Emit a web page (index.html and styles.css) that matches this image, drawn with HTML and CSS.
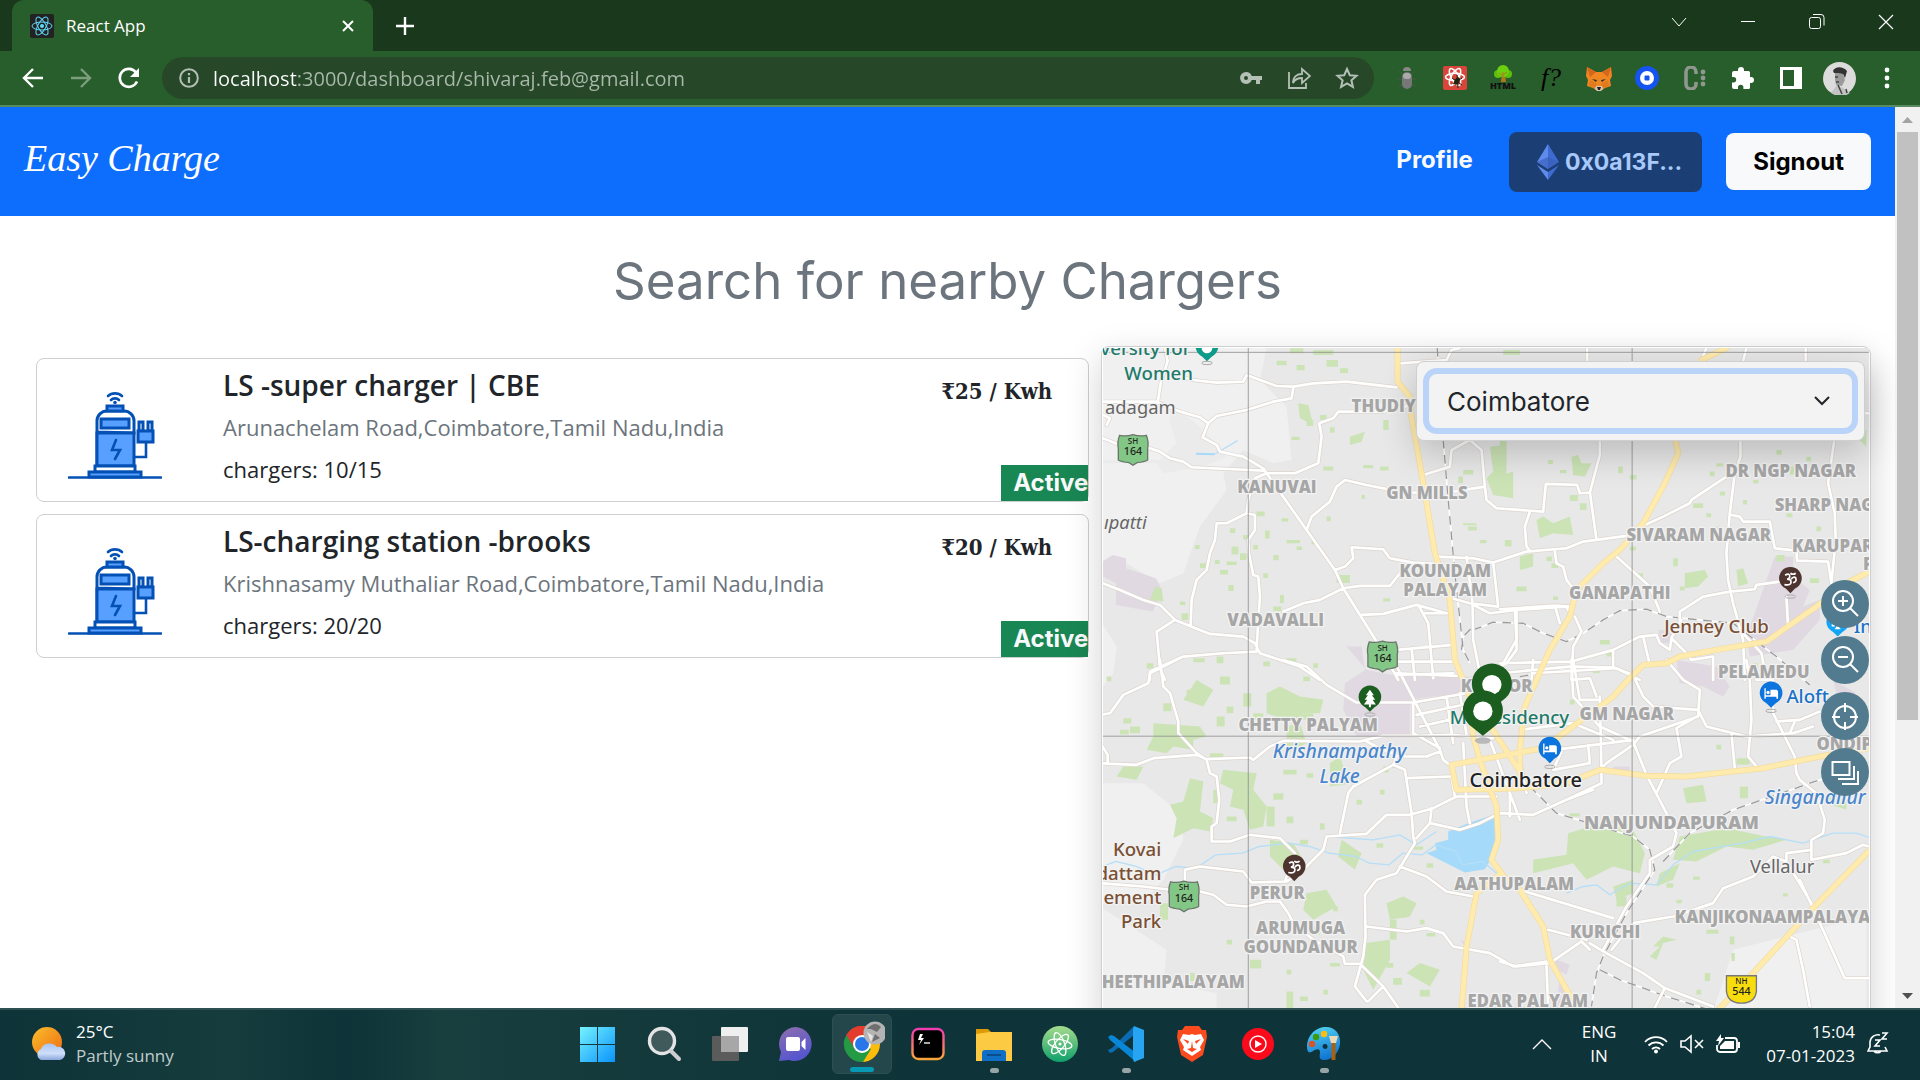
FILE: index.html
```html
<!DOCTYPE html>
<html lang="en">
<head>
<meta charset="utf-8">
<title>React App</title>
<meta name="viewport" content="width=device-width, initial-scale=1">
<link rel="stylesheet" href="styles.css">
</head>
<body>
<div class="tabstrip">
  <div class="tab">
    <svg class="favicon" viewBox="0 0 24 24"><rect width="24" height="24" rx="2" fill="#222"/><g fill="none" stroke="#61dafb"><ellipse cx="12" cy="12" rx="10" ry="4"/><ellipse cx="12" cy="12" rx="10" ry="4" transform="rotate(60 12 12)"/><ellipse cx="12" cy="12" rx="10" ry="4" transform="rotate(120 12 12)"/></g><circle cx="12" cy="12" r="2" fill="#61dafb"/></svg>
    <span class="tab-title">React App</span>
    <button class="tab-close" aria-label="Close tab"><svg width="14" height="14" viewBox="0 0 14 14"><path d="M2 2l10 10M12 2L2 12" stroke="#fff" stroke-width="2"/></svg></button>
  </div>
  <button class="new-tab" aria-label="New tab"><svg width="18" height="18" viewBox="0 0 18 18"><path d="M9 0v18M0 9h18" stroke="#fff" stroke-width="2.4"/></svg></button>
  <div class="window-controls">
    <button aria-label="Search tabs"><svg width="16" height="16" viewBox="0 0 16 16"><path d="M1 4l7 8 7-8" fill="none" stroke="#fff"/></svg></button>
    <button aria-label="Minimise"><svg width="16" height="16" viewBox="0 0 16 16"><path d="M1 7.500h14" stroke="#fff"/></svg></button>
    <button aria-label="Restore"><svg width="16" height="16" viewBox="0 0 16 16"><g fill="none" stroke="#fff"><rect x=".5" y="3.5" width="11" height="11" rx="2"/><path d="M4 .5h8a3 3 0 0 1 3 3v8"/></g></svg></button>
    <button aria-label="Close"><svg width="16" height="16" viewBox="0 0 16 16"><path d="M1 1l14 14M15 1L1 15" stroke="#fff" stroke-width="1.2"/></svg></button>
  </div>
</div>

<div class="toolbar">
  <button class="tool" aria-label="Back"><svg width="24" height="24" viewBox="0 0 24 24"><path d="M22 12H4M12 3l-9 9 9 9" fill="none" stroke="#fff" stroke-width="2.4"/></svg></button>
  <button class="tool" aria-label="Forward"><svg width="24" height="24" viewBox="0 0 24 24"><path d="M2 12h18M12 3l9 9-9 9" fill="none" stroke="#7c9e7e" stroke-width="2.4"/></svg></button>
  <button class="tool" aria-label="Reload"><svg width="24" height="24" viewBox="0 0 24 24"><path d="M20 15.500A9 9 0 1 1 19 6.500" fill="none" stroke="#fff" stroke-width="2.600"/><path d="M22 2v9h-9z" fill="#fff"/></svg></button>
  <div class="omnibox">
    <svg width="20" height="20" viewBox="0 0 20 20"><circle cx="10" cy="10" r="8.800" fill="none" stroke="#b4bfb5" stroke-width="2"/><path d="M10 9v6M10 5v2.200" stroke="#b4bfb5" stroke-width="2.200"/></svg>
    <input class="url" type="text" aria-label="Address" value="localhost:3000/dashboard/shivaraj.feb@gmail.com">
    <button class="tool" aria-label="Passwords"><svg width="24" height="24" viewBox="0 0 24 24"><path fill="#b4bfb5" fill-rule="evenodd" d="M7 6a6 6 0 1 0 5.700 8H17v4h4v-4h2v-4H12.700A6 6 0 0 0 7 6zm0 4a2 2 0 1 1 0 4 2 2 0 0 1 0-4z"/></svg></button>
    <button class="tool" aria-label="Share"><svg width="24" height="24" viewBox="0 0 24 24"><g fill="none" stroke="#b4bfb5" stroke-width="1.800"><path d="M2 6v16h17v-5"/><path d="M6 17c0-6 4-9 9-9V3l8 7-8 7v-5c-4 0-7 1-9 5z"/></g></svg></button>
    <button class="tool" aria-label="Bookmark"><svg width="24" height="24" viewBox="0 0 24 24"><path d="M12 3l2.800 6.200 6.700.6-5.100 4.500 1.500 6.600L12 17.400 6.100 20.900l1.500-6.600L2.500 9.800l6.700-.6z" fill="none" stroke="#b4bfb5" stroke-width="2"/></svg></button>
  </div>
  <div class="extensions">
    <button class="tool" aria-label="Bug tracker"><svg width="24" height="26" viewBox="0 0 24 26"><g stroke="#4a574b"><path d="M4 6l4 4M20 6l-4 4M2 14h5M22 14h-5M4 22l4-4M20 22l-4-4"/></g><path d="M8 6a4 4 0 0 1 8 0z" fill="#888"/><rect x="7" y="7" width="10" height="17" rx="5" fill="#777"/><rect x="8" y="8" width="8" height="6" rx="3" fill="#aaa"/></svg></button>
    <button class="tool" aria-label="React tools"><svg width="24" height="24" viewBox="0 0 24 24"><rect width="24" height="24" rx="2" fill="#d9453a"/><g fill="none" stroke="#fff" stroke-width="1.600"><ellipse cx="12" cy="11" rx="9.500" ry="3.700"/><ellipse cx="12" cy="11" rx="9.500" ry="3.700" transform="rotate(60 12 11)"/><ellipse cx="12" cy="11" rx="9.500" ry="3.700" transform="rotate(120 12 11)"/></g><ellipse cx="14" cy="15" rx="2.500" ry="4" fill="#221" transform="rotate(30 14 15)"/><path d="M9 12l10 7M10 18l9-6M14 9l1 13" stroke="#221"/></svg></button>
    <button class="tool" aria-label="HTML tree"><svg width="30" height="30" viewBox="0 0 30 30"><path d="M14 10h3l1 9h-5z" fill="#b07a1c"/><circle cx="10" cy="11" r="4" fill="#5cbf0c"/><circle cx="20" cy="11" r="4" fill="#5cbf0c"/><circle cx="15" cy="8" r="6" fill="#6bd010"/><path d="M15 9v9M15 13l-4-3M15 12l4-3" stroke="#b07a1c"/><text x="15" y="26" class="ext-html">HTML</text></svg></button>
    <button class="tool ext-f" aria-label="Font finder">f?</button>
    <button class="tool" aria-label="Wallet"><svg width="26" height="26" viewBox="0 0 26 26"><path d="M1 2l9 5h6l9-5 1 9-2 4 1 6-6 2-3 2h-6l-3-2-6-2 1-6-2-4z" fill="#f08621"/><path d="M1 2l9 5-6 5zM25 2l-9 5 6 5z" fill="#d5661b"/><path d="M3 21l1-6 7 4-2 4zM23 21l-1-6-7 4 2 4z" fill="#e07a1e"/><path d="M10 21l-1 3 2 2h4l2-2-1-3z" fill="#d8c6b8"/><path d="M11 22h4l-1 3h-2z" fill="#222"/><path d="M6 14l5 1-1 2zM20 14l-5 1 1 2z" fill="#333"/></svg></button>
    <button class="tool" aria-label="Coin wallet"><svg width="24" height="24" viewBox="0 0 24 24"><circle cx="12" cy="12" r="12" fill="#1554f0"/><circle cx="12" cy="12" r="7" fill="#fff"/><rect x="9.500" y="9.500" width="5" height="5" rx="1" fill="#1554f0"/></svg></button>
    <button class="tool" aria-label="Colour tool"><svg width="24" height="24" viewBox="0 0 24 24"><path d="M13 8V6a4.500 4.500 0 0 0-10 0v12a4.500 4.500 0 0 0 10 0v-2" fill="none" stroke="#8f9790" stroke-width="3.600"/><g fill="#8f9790"><circle cx="20" cy="6" r="2.400"/><circle cx="20" cy="12" r="2.400"/><circle cx="20" cy="18" r="2.400"/></g></svg></button>
    <button class="tool" aria-label="Extensions"><svg width="24" height="24" viewBox="0 0 24 24"><path fill="#fff" d="M20 11h-1V6.500A1.500 1.500 0 0 0 17.500 5H13V4a3 3 0 0 0-6 0v1H3a2 2 0 0 0-2 2v4h1.500a2.700 2.700 0 0 1 0 5.400H1V21a2 2 0 0 0 2 2h4v-1.500a2.700 2.700 0 0 1 5.400 0V23h5.100a1.500 1.500 0 0 0 1.500-1.500V17h1a3 3 0 0 0 0-6z"/></svg></button>
    <button class="tool" aria-label="Side panel"><svg width="24" height="24" viewBox="0 0 24 24"><path fill="#fff" fill-rule="evenodd" d="M1 1h22v22H1zM4 4v16h11V4z"/></svg></button>
    <button class="tool" aria-label="Account"><svg width="33" height="33" viewBox="0 0 33 33"><circle cx="16.500" cy="16.500" r="16.500" fill="#dcdcdc"/><path d="M10 9c2-5 10-5 14 0l-2 7-2-4-9-1z" fill="#333"/><path d="M12 11l8 1 2 6-3 6-6-1-1-5z" fill="#9a9a9a"/><path d="M8 31l6-8 6 3 7 5a16 16 0 0 1-19 0z" fill="#c3c3c3"/><path d="M15 23l4 9M23 27l1 4M12 15h3M13 20h3" stroke="#444" stroke-width="1.500"/></svg></button>
    <button class="tool" aria-label="Menu"><svg width="24" height="24" viewBox="0 0 24 24"><g fill="#fff"><circle cx="12" cy="4" r="2.400"/><circle cx="12" cy="12" r="2.400"/><circle cx="12" cy="20" r="2.400"/></g></svg></button>
  </div>
</div>

<div class="viewport">
<div class="page">
  <header class="navbar">
    <a class="brand" href="#">Easy Charge</a>
    <nav class="nav-actions">
      <a class="profile" href="#">Profile</a>
      <button class="wallet"><svg width="22" height="36" viewBox="0 0 22 36"><path d="M11 0L0 18l11 7z" fill="#5f8bec"/><path d="M11 0l11 18-11 7z" fill="#3f6bd0"/><path d="M0 21l11 15v-8z" fill="#5f8bec"/><path d="M22 21L11 36v-8z" fill="#3f6bd0"/><path d="M0 18l11-5 11 5-11 7z" fill="#355cb8" opacity=".6"/></svg><span>0x0a13F...</span></button>
      <button class="signout">Signout</button>
    </nav>
  </header>

  <h1 class="heading">Search for nearby Chargers</h1>

  <main class="content">
    <section class="stations">
      <svg class="sprite" aria-hidden="true"><symbol id="charger" viewBox="0 0 94 88"><g fill="#57a0ff" stroke="#0451b5" stroke-width="3"><path d="M29 84v-41h36v37H29zM29 41V30a10 10 0 0 1 10-10h17a10 10 0 0 1 10 10v12z" fill="#fff"/><rect x="39" y="15" width="16" height="5"/><rect x="33" y="28" width="28" height="9"/><rect x="29" y="42" width="37" height="33"/><rect x="27" y="75" width="40" height="6" fill="#fff"/><rect x="21" y="81" width="52" height="5"/><rect x="71" y="31" width="4" height="9" fill="#fff"/><rect x="80" y="31" width="4" height="9" fill="#fff"/><rect x="70" y="40" width="15" height="11"/></g><g fill="none" stroke="#0451b5" stroke-width="2.600" stroke-linecap="round"><path d="M1 86.500h92M66 66h12V52M48 49l-4 10h8l-5 9" /><path d="M40 5a9 7 0 0 1 14 0M43 9a5 4 0 0 1 8 0"/></g><circle cx="47" cy="11.500" r="1.800" fill="#0451b5"/></symbol></svg>
      <article class="station">
        <div class="station-icon"><svg width="94" height="88"><use href="#charger"/></svg></div>
        <div class="station-info">
          <h2>LS -super charger | CBE</h2>
          <p class="address">Arunachelam Road,Coimbatore,Tamil Nadu,India</p>
          <p>chargers: 10/15</p>
        </div>
        <div class="station-side"><span class="price">₹25 / Kwh</span><span class="status">Active</span></div>
      </article>
      <article class="station">
        <div class="station-icon"><svg width="94" height="88"><use href="#charger"/></svg></div>
        <div class="station-info">
          <h2>LS-charging station -brooks</h2>
          <p class="address">Krishnasamy Muthaliar Road,Coimbatore,Tamil Nadu,India</p>
          <p>chargers: 20/20</p>
        </div>
        <div class="station-side"><span class="price">₹20 / Kwh</span><span class="status">Active</span></div>
      </article>
    </section>

    <section class="map-card">
      <svg class="map" viewBox="9 24 2298 2160" role="img" aria-label="Map of Coimbatore">
        <defs>
          <g id="minor">
            <path d="M195 24l8 40-20 60-10 65M8 185H170L240 215 300 232 325 250 350 228 440 210 520 185 575 175 580 145M205 100L280 120 350 128 430 125 440 105 530 138 580 140 640 130 740 125 890 142M325 250L308 292 350 315 360 335 430 350 490 385 500 400 620 570 705 690 730 745 830 905 895 1020M8 225l22 10-10 20M8 295L60 315 140 322 180 335 210 355 250 365 275 382 400 388 490 392M500 400L585 400 655 370 665 290 658 250 700 235 715 215 850 215 935 195M500 400L465 415 445 480 440 520 380 550 350 550 345 600 330 640 320 690 290 720 275 780 272 855M440 520L465 525 465 570 445 600 447 640 460 705 475 710 480 770 475 840 470 930M620 570L635 530 690 485 710 440 735 420 800 435 900 455 970 460M705 690L735 680 760 655 755 622 850 628 870 655 940 668 1010 672M730 745L780 738 870 738 900 700M8 730L60 750 130 780 180 795 225 840 330 882 430 890 465 910 480 940 600 980 660 1020M225 840L170 875 180 985 195 1020M150 1020V995L250 950 370 940 470 935M550 815L610 790 660 780 730 745M785 825L850 822 950 795 1040 820M900 70L1040 60 1055 30 1080 24M970 405L1050 380 1055 330 1110 300 1145 330 1155 440 1160 480 1190 505 1330 515 1338 432 1432 435 1440 460 1470 458 1500 345V305M1060 455L1155 440M1010 650L1120 655 1180 668 1280 635 1400 625 1450 605 1580 588M1180 668L1195 800 1110 790 1055 775M970 820L1050 820M955 795L985 850 1000 1015M890 930L1060 915M890 965H1060M890 1000L1070 1008M935 925L945 1020M1100 650L1118 790 1120 900 1140 1000M1120 795L1170 820 1250 810 1400 800 1410 820M1250 810V930L1220 970 1140 1010"/>
            <path transform="translate(1200 0)" d="M262 24V65M620 24l-15 36M740 24l-10 40M918 24v40M270 455L290 600M90 515L75 560 80 620 90 632M165 635L170 670 190 680 200 720 215 740M350 650L450 740 480 815M425 560L490 530 520 515 570 490 575 480 680 410 720 400M722 305V350L705 400 690 520 680 640 685 720 700 790 730 900 735 1020M1003 305L985 430 1005 520 1008 600 995 730M695 525L720 530 730 545 810 545 825 625 890 632 892 662 985 665 995 730M540 840V815L610 770 690 755 765 748 770 735 840 725M860 770L865 860M1107 220l-60-5M0 808L165 797 210 800M165 797L180 850M225 830L245 875 220 920 215 1020M0 970L215 965 340 930 420 890 470 885 480 910 510 930M340 930V980M430 890L450 975M510 930L515 895 545 840M515 895L560 940 575 960 640 950 640 1020M45 810L50 900 10 970M730 880L785 940 800 1020M100 1000L350 985 420 1020"/>
            <path transform="translate(0 960)" d="M180 0L190 80 210 100 235 185 235 220 290 280 320 300 330 340 350 350 358 420 350 490 335 500V545L390 545 450 525 540 535 585 580M0 165L30 160 70 105 145 70 150 40 230 0M8 260l15 25v25M0 310L110 315 160 295 290 285 320 298 450 293 460 300 510 260 550 243 780 245 850 228 960 228 1050 225 1180 235M545 0L620 20 680 75 770 128 940 128M880 0L1020 270 1030 300 1050 315M940 128V220L1020 265M800 245L840 265 900 290 980 290 1020 275M890 45L1060 40M940 128L1100 100M950 165L1110 130M960 200L1115 165M1040 110L1060 250M1080 100L1100 225M890 290L880 315 915 330 935 460 940 530 945 550 890 640 830 660 795 705 797 830 790 890 765 980 800 1025M880 315L760 380 745 400 720 520M920 355L1050 350M560 665L600 640 670 570 680 530 800 522 860 465 930 465 1000 445 1070 410 1190 410M995 445L990 490 1080 510 1140 490 1200 460 1300 465 1400 420 1480 390M990 490L950 535M0 670L130 680 210 690M255 665V630L300 620 430 635 455 668 555 665 560 650M300 695L340 705 380 735 440 740 500 725 540 725 565 760 580 790 640 840 730 890 735 912H780L850 980 895 1044M850 980L805 1025M900 620L980 650 1040 695 1120 710M800 800L920 815 980 805 1030 820 1060 860 1170 880 1240 920 1345 905M1055 350L1065 410M1090 250L1100 440 1110 490M1230 470V400M1170 240L1260 480"/>
            <path transform="translate(1200 960)" d="M215 0L220 110 300 200 400 245 440 345 500 460 530 520 520 560 450 600V640L380 740 310 870M0 40L210 20 340 22 400 45 430 110 460 140 595 150 620 200 740 230 880 220 940 200M500 0L550 60 600 90 595 170 420 230 400 255 320 310 300 330M600 165L530 205 545 290 510 310 470 400M740 0L750 60 755 180 745 290 770 320M695 220L705 325M770 60L820 60 820 160 885 290 890 340 900 360 950 400 975 480 970 520 935 540V600M830 185L900 180 960 155M885 185L870 220M270 870L245 845 150 910 50 920 0 905M270 850L310 875 430 940 495 985 640 1040M495 985L465 1044M60 690L340 775M335 870L400 790 520 770 640 730 670 685 760 650 820 590 860 605 860 580 935 570M860 605L935 730M900 660L940 745 1035 955 1107 955M935 600L1040 580 1090 555 1107 560M870 830L890 840 910 930 930 1040M145 810L260 840M140 920L145 1044M165 270L400 240M220 0L240 120 300 120M215 60L270 55 290 110M300 110L305 325M190 265L160 330M265 255L270 310 160 330M305 330V370L210 415M60 300L80 400M100 0L95 60M60 210L220 190 340 240"/>
          </g>
          <g id="major">
            <path d="M893 24V125L930 170 935 230 965 400 1005 640 1050 780 1065 960 1110 1070 1120 1190 1140 1260 1175 1360 1190 1400 1195 1500 1175 1560 1205 1600 1130 1660 1100 1820 1085 2010V2190M1880 24L1805 60M1728 305L1735 340 1695 430 1630 550 1560 630 1510 670 1430 750 1410 830 1350 930 1310 1020 1275 1100 1260 1230 1260 1340M2340 680L2240 730 2150 800 2000 905 1850 930 1740 950 1700 970 1630 975 1585 1020 1540 1070 1500 1100 1330 1225 1055 1275 1070 1350 1260 1345 1400 1330 1500 1290 1640 1308 1760 1310 1990 1285 2160 1250 2340 1220M1165 1150L1270 1310M1200 1600L1260 1650 1330 1760 1350 1860 1440 2020M2340 1500L2140 1705 1960 1900 1780 2090"/>
          </g>
        </defs>
        <rect x="0" y="0" width="2320" height="2200" fill="#e8e8e8"/>
        <g fill="#f0f0f0">
          <path d="M0 24H500L480 120 560 200 575 360 520 370 430 330 370 400 380 450 300 560 250 700 180 730 80 670 0 660zM205 250L310 230 320 250 300 310 240 320z"/>
          <path d="M0 840l50 80-10 80-40 50zM0 1330h130l110 90 10 80-60 120-50 60-140 10zM0 1700l200 130-10 100 160 30v80H0z"/>
          <path d="M1900 1830l400-100v470h-520z"/>
        </g>
        <path d="M0 370h170l20 30 120-20 70-30-80-90-90-70v60l20 60-50 50H0z" fill="#e8e8e8" opacity=".6"/>
        <g fill="#e0d9e2">
          <path d="M8 665l30-20 40 10v30l90 30 20 40-30 60-110-20V730l-40-20zM740 920h45l10 70-60 40-5 80 40 80 160-5V1080l70-10 120-15V1010H900L800 990zM2025 650h55v60l50 40-20 50 50-20v60l-80 90-130 20-10-60zM2270 1060h-60l-10-40zM1730 960l120 20 40 60-20 30-60-30-70-10zM1675 870h40v40h-30z"/>
          <path d="M1180 1800l30 10-5 20zM1640 1280h50v25h-50zM1470 1860l40 15-10 30-40-20zM1480 1900l20 50-30 60z" transform="translate(-100 0)"/>
        </g>
        <g fill="#cbe3b5">
          <path d="M160 1150l140 10 20 30-40 10v30l-60-10-20 20-60-10 20-40zM70 1280h60l-20 40-60-10zM270 1315l40 10-10 90 40 20-10 40-50-10-60 30 10-60-20-40 40-10zM370 1290l100 10-10 50 40 50-10 60-40 10-20-60-40-10 10-50-40-20zM500 1060l40-20 60 30 70 10-10 40-50 0-10 20-50 0-50-20zM560 1160l40-10 20 60-60 30zM290 1020l50 30-30 50-60-20zM690 1270l30-20 20 60 20 20-70 10zM510 1500l70 10 30 50-60 30-40-40zM620 1660l60-10 30 50-70 40-30-30zM800 1810l70-10v60l-50 90-30-60zM860 1690l50-20 40 20-20 40-60 10zM725 1500l60 40-20 50-50-40zM920 1900l40-30 60 20-30 50z"/>
          <path d="M1405 1480L1540 1440 1570 1480 1600 1470 1635 1540 1620 1600 1540 1580 1460 1620 1420 1570 1300 1600V1560L1400 1545zM1740 1490L1880 1465 2000 1490 2060 1500 1960 1530 1880 1520 1790 1565 1720 1560zM1680 1600l60-30-20 50-50 20zM1540 1640l60-20v40l-50 20zM1750 1345l60-10 10 50-60 5zM1920 1340h25v35h-25zM1910 1255h40v20h-40zM2180 1360l60 10v40l-60-20z"/>
          <path d="M750 290l45-15-10 30-35 10zM595 190l30 5 15 60-40-20zM1415 350l20-5 10 25h30l-20 40-35-5zM1310 540l20-10 30 20 50-20 10 55-60-5-40 15zM1755 700l60-10 10 20-30 30-40 5zM1910 690l20-5 15 45-30 10zM2270 290l30-20v50zM1170 320l40-5v90l30-10v80l-60-10-20-50 20-20zM1660 1820l30-30 40 10-40 10-20 50-20-10 30-30zM165 740l20 5 5 40-40-5zM1200 300h20v120h-20zM1260 650l40-10v40l-40 10z"/>
          <path d="M570 25h40v15h-40zM640 30h60v15h-60zM530 62h30v14h-30zM590 75h24v16h-24zM680 60h34v20h-34zM720 85h24v14h-24zM575 290h24v10h-24zM690 262h14v16h-14zM660 225h20v14h-20zM790 200h14v14h-14zM850 240h16v30h-16zM820 175h26v14h-26zM620 240h20v18h-20zM670 380h30v12h-30zM525 442h14v10h-14zM470 515h24v14h-24zM545 535h20v10h-20zM495 572h14v24h-14zM460 615h14v14h-14zM560 600h40v10h-40zM430 585h14v14h-14zM390 565h16v14h-16zM395 620h20v24h-20zM360 690h24v14h-24zM345 660h14v12h-14zM300 670h20v14h-20zM385 735h16v18h-16zM420 640h20v20h-20zM520 645h16v16h-16zM490 700h14v14h-14zM540 765h12v24h-12zM520 800h24v14h-24zM590 620h16v10h-16zM635 600h14v14h-14zM710 705h40v24h-40zM680 530h12v14h-12zM785 465h10v12h-10zM790 375h30v10h-30zM840 380h26v12h-26zM850 775h20v10h-20zM245 820h20v20h-20zM285 615h14v12h-14zM350 950h20v20h-20zM280 955h34v12h-34zM140 970h20v16h-20zM490 965h20v14h-20zM240 785h16v10h-16zM560 955h30v10h-30zM640 970h14v14h-14zM610 1010h20v14h-20zM380 665h30v10h-30zM1090 390h30v14h-30zM1075 410h14v20h-14zM1105 560h26v12h-26zM1090 550h40v6h-40zM1140 600h20v10h-20zM1215 600h20v20h-20z"/>
          <path d="M1345 360h14v12h-14zM1380 390h20v10h-20zM1410 465h24v18h-24zM1440 490h20v20h-20zM1555 380h14v20h-14zM1590 405h20v14h-20zM1340 650h16v14h-16zM1355 670h20v14h-20zM1720 655h14v24h-14zM1610 700h20v14h-20zM1590 620h18v12h-18zM1660 770h14v14h-14zM1780 490h30v14h-30zM1820 520h14v12h-14zM1860 455h16v12h-16zM1830 395h14v14h-14zM1850 370h20v10h-20zM2070 380h14v24h-14zM2030 330h16v14h-16zM2120 350h14v14h-14zM1960 420h16v10h-16zM1930 480h12v14h-12zM2030 645h24v20h-24zM2130 715h28v14h-28zM2060 520h18v12h-18zM2150 560h14v14h-14zM1850 560h14v14h-14zM1500 900h30v14h-30zM1520 930h20v20h-20zM1480 985h20v14h-20zM1360 770h14v10h-14zM1250 740h30v14h-30zM1210 30h50v15h-50zM1370 560h12v20h-12zM1820 870h20v12h-20zM1960 970h14v14h-14zM1740 740h14v12h-14z"/>
          <path d="M70 1135h24v16h-24zM260 1050h40v20h-40zM190 1090h24v24h-24zM90 1160h30v20h-30zM60 1170h26v14h-26zM360 1010h30v24h-30zM430 1060h24v40h-24zM380 1100h20v20h-20zM460 1120h30v20h-30zM350 1130h24v30h-24zM620 1080h24v20h-24zM600 1120h40v20h-40zM330 1240h40v14h-40zM550 1290h40v14h-40zM620 1300h20v14h-20zM520 1360h30v20h-30zM500 1400h24v60h-24zM560 1430h20v20h-20zM380 1430h30v14h-30zM660 1450h14v20h-14zM600 1500h24v14h-24zM340 1350h14v40h-14zM850 1280h16v18h-16zM840 1350h14v14h-14zM770 1380h16v14h-16zM830 1510h20v14h-20zM940 1520h30v10h-30zM980 1570h20v14h-20zM180 1690h24v50h-24zM380 1800h16v14h-16zM270 1900h14v24h-14zM450 1860h34v26h-34zM560 1955h20v50h-20zM600 1970h24v14h-24zM560 1890h14v14h-14zM690 1870h30v10h-30zM670 1950h14v14h-14zM960 1740h14v14h-14zM980 1780h26v10h-26zM900 1720h20v14h-20zM870 1740h20v60h-20zM860 1870h20v14h-20zM880 1915h26v20h-26zM960 1950h30v20h-30zM1090 1850h14v14h-14zM1060 1640h20v14h-20zM640 1760h20v24h-20zM700 1700h14v14h-14zM1820 1770h36v12h-36zM1890 1790h14v24h-14zM1895 1840h10v24h-10zM1815 1900h16v24h-16zM1730 1680h16v10h-16zM1780 1610h20v10h-20zM2170 1560h20v10h-20zM1410 1420h30v10h-30zM1700 1630h20v14h-20zM1550 1670h30v30h-30zM1410 1080h14v14h-14zM1400 1960h20v10h-20zM1790 1950h14v14h-14zM1850 1215h14v14h-14zM2050 1660h14v10h-14zM20 1010h14v14h-14z"/>
        </g>
        <path d="M288 338l60 2-5 6-55-2zM980 1540l30-10-5-20 40-10v-25l60-25 80-27v115l-30 50-60 10z" fill="#a5dafa"/>
        <g fill="none" stroke="#b5def7" stroke-width="4" stroke-linejoin="round">
          <path d="M348 340l65-38M8 1580l40-15 60 15 60 25 60-25 60 5 60-40 80-5 50-20 90-10 60 10 60 20 80 10 40 20 60 5 40-35 60 5 40-30 60 20 20 40 60-10 60 50 50 0 40 20M680 1490l140 10 80-15 50 30 60-40M1400 1660l50-20 40-5 40 30 60-35 80 5 50-60 60-40 60-10 90-15 80-20 100 20 90-30 70 0 60 20 60-30"/>
        </g>
        <g fill="none" stroke="#fff" stroke-width="5"><path id="rail" d="M1012 24L1030 300 1045 480 1065 700 1090 930 1110 970M1120 870L1180 847 1270 850 1330 880 1400 905 1450 880 1510 840 1560 812 1640 808 1700 830 1900 850 2030 950 2130 1035M1085 930L1090 890 1120 860M1260 1010l130-20M1290 1340L1370 1420 1500 1460 1600 1490 1650 1530 1665 1590 1580 1720 1510 1850 1490 1900 1475 2000M1500 1890L1560 1920 1700 1970 1860 2020M1690 1565L1770 1480 1900 1410 2160 1320 2310 1290"/></g>
        <use href="#rail" class="rail"/>
        <use href="#minor" class="casing"/>
        <use href="#minor" class="road"/>
        <use href="#major" class="major-casing"/>
        <use href="#major" class="major"/>
        <path d="M9 37H2307M9 1189H2307M445 24V2184M1597 24V2184" stroke="#8c8c8c" stroke-width="3" opacity=".8"/>

        <g class="area">
          <text x="755" y="215" class="start">THUDIY</text><text x="531" y="460">KANUVAI</text><text x="981" y="477">GN MILLS</text>
          <text x="1036" y="712">KOUNDAM</text><text x="1036" y="768">PALAYAM</text><text x="527" y="857">VADAVALLI</text>
          <text x="2073" y="411">DR NGP NAGAR</text><text x="2025" y="514" class="start">SHARP NAG</text><text x="1797" y="602">SIVARAM NAGAR</text>
          <text x="2077" y="635" class="start">KARUPAR</text><text x="2290" y="690" class="start">P</text><text x="1560" y="776">GANAPATHI</text><text x="1992" y="1014">PELAMEDU</text>
          <text x="625" y="1173">CHETTY PALYAM</text><text x="1083" y="1055" class="start">K</text><text x="1298" y="1055" class="end">OR</text>
          <text x="532" y="1678">PERUR</text><text x="602" y="1784">ARUMUGA</text><text x="602" y="1841">GOUNDANUR</text><text x="435" y="1945" class="end">HEETHIPALAYAM</text>
          <text x="1243" y="1652">AATHUPALAM</text><text x="1284" y="2001">EDAR PALYAM</text><text x="1581" y="1140">GM NAGAR</text><text x="2150" y="1231" class="start">ONDIP</text>
          <text x="1715" y="1468" class="wide">NANJUNDAPURAM</text><text x="1725" y="1750" class="start">KANJIKONAAMPALAYA</text><text x="1516" y="1796">KURICHI</text>
        </g>
        <g class="town"><text x="121" y="222">adagam</text><text x="2047" y="1601">Vellalur</text><text x="76" y="566" class="hamlet">ıpatti</text><text x="1278" y="1340" class="city">Coimbatore</text></g>
        <g class="poi">
          <g fill="#1f7a6b"><text x="272" y="46" class="end">versity for</text><text x="176" y="120">Women</text><text x="1050" y="1152" class="start">M</text><text x="1408" y="1152" class="end">esidency</text></g>
          <g fill="#7a5034"><text x="1850" y="878">Jenney Club</text><text x="184" y="1548" class="end">Kovai</text><text x="184" y="1620" class="end">dattam</text><text x="184" y="1693" class="end">sement</text><text x="184" y="1764" class="end">Park</text></g>
          <g fill="#1a73c8"><text x="2060" y="1090" class="start">Aloft</text><text x="2262" y="878" class="start">In</text></g>
          <g class="water"><text x="719" y="1255">Krishnampathy</text><text x="719" y="1328">Lake</text><text x="1995" y="1394" class="start">Singanallur</text></g>
        </g>

        <defs>
          <g id="sh"><path d="M-40-42q20 4 40-2 20 6 40 2 8 20 4 40v34q-10 6-32 8l-12 8-12-8q-22-2-32-8v-34q-4-20 4-40z" fill="#82c785" stroke="#6b766b" stroke-width="4"/><text y="-16" class="shield small">SH</text><text y="18" class="shield">164</text></g>
          <path id="pin" d="M0 42L-14 28A34 34 0 1 1 14 28z"/>
          <g id="om"><use href="#pin" fill="#4e342e"/><path d="M-16-12q14-8 14 4 0 6-8 8 12 0 12 8 0 12-20 8M2 0q8-10 14-4 4 12-8 14M0-18q8 6 16 0" fill="none" stroke="#fff" stroke-width="5"/></g>
          <g id="bed"><use href="#pin" fill="#0b74de"/><path d="M-20-17v32h4v-6h32v6h5V-8l-4-4H-2V4h-14v-21z" fill="#fff"/><circle cx="-9" cy="-4" r="5" fill="#fff"/></g>
          <g id="marker"><path d="M0 74L-42 40A60 60 0 1 1 42 40z" fill="#1b5e20"/><circle r="29" fill="#fff"/></g>
        </defs>
        <g class="pin-shadow"><ellipse cx="321" cy="69" rx="16" ry="5"/><ellipse cx="2072" cy="770" rx="16" ry="5"/><ellipse cx="810" cy="1124" rx="16" ry="5"/><ellipse cx="1350" cy="1281" rx="16" ry="5"/><ellipse cx="2014" cy="1113" rx="16" ry="5"/></g>
        <use href="#sh" x="99" y="328"/><use href="#sh" x="848" y="948"/><use href="#sh" x="252" y="1668"/>
        <g transform="translate(1925 1948)"><path d="M-45-40h90v46q-4 36-45 36t-45-36z" fill="#f7dd0e" stroke="#777" stroke-width="4"/><text y="-15" class="shield small">NH</text><text y="18" class="shield">544</text></g>
        <use href="#pin" x="321" y="22" fill="#0f9b8a"/><circle cx="321" cy="24" r="16" fill="#fff"/>
        <use href="#pin" x="2214" y="848" fill="#12a5f5"/><path d="M2205 868l9-14 9 14zM2196 852h10v8h-10zM2222 852h10v8h-10z" fill="#fff"/>
        <use href="#pin" x="810" y="1074" fill="#1b5e20"/><path d="M810 1050l12 16h-6l10 14h-8l10 14h-15v8h-6v-8h-15l10-14h-8l10-14h-6z" fill="#fff"/>
        <use href="#om" x="2072" y="718"/><use href="#om" x="583" y="1582"/>
        <use href="#bed" x="1350" y="1228"/><use href="#bed" x="2014" y="1062"/>
        <ellipse cx="1149" cy="1202" rx="24" ry="10" fill="#b9b9b9"/>
        <use href="#marker" x="1176" y="1034"/><use href="#marker" x="1149" y="1114"/>
      </svg>
      <div class="city-picker">
        <select class="city-select" aria-label="City"><option>Coimbatore</option></select>
      </div>
      <div class="map-controls">
        <button aria-label="Zoom in"><svg width="28" height="28" viewBox="0 0 28 28"><g fill="none" stroke="#fff" stroke-width="2"><circle cx="12" cy="11" r="10"/><path d="M19 18l8 8M12 6v10M7 11h10"/></g></svg></button>
        <button aria-label="Zoom out"><svg width="28" height="28" viewBox="0 0 28 28"><g fill="none" stroke="#fff" stroke-width="2"><circle cx="12" cy="11" r="10"/><path d="M19 18l8 8M7 11h10"/></g></svg></button>
        <button aria-label="Locate"><svg width="28" height="28" viewBox="0 0 28 28"><g fill="none" stroke="#fff" stroke-width="2"><circle cx="14" cy="15" r="11"/><path d="M14 1v9M14 20v8M1 15h8M19 15h8"/></g></svg></button>
        <button aria-label="Layers"><svg width="28" height="28" viewBox="0 0 28 28"><g fill="none" stroke="#fff" stroke-width="2"><rect x="1.500" y="4" width="17" height="13"/><path d="M7 21h16V8M11 26h16V13"/></g></svg></button>
      </div>
    </section>
  </main>
</div>
<div class="scrollbar">
  <svg width="11" height="6" viewBox="0 0 11 6"><path d="M5.500 0L11 6H0z" fill="#a3a3a3"/></svg>
  <div class="track"><div class="thumb"></div></div>
  <svg width="11" height="6" viewBox="0 0 11 6"><path d="M0 0h11L5.500 6z" fill="#505050"/></svg>
</div>
</div>

<footer class="taskbar">
  <div class="weather">
    <svg width="34" height="34" viewBox="0 0 34 34"><defs><linearGradient id="sun" x1="0" y1="0" x2="1" y2="1"><stop stop-color="#fbc02d"/><stop offset="1" stop-color="#ee6a10"/></linearGradient><linearGradient id="cloud" x1="0" y1="0" x2="0" y2="1"><stop stop-color="#a9c3f5"/><stop offset=".6" stop-color="#cfdff9"/><stop offset="1" stop-color="#8aa6dd"/></linearGradient></defs><circle cx="15" cy="15" r="15" fill="url(#sun)"/><path d="M9 33a6 6 0 0 1 0-11 9 8 0 0 1 16-2 6 6 0 0 1 3 13z" fill="url(#cloud)"/></svg>
    <div class="weather-text"><span>25°C</span><span class="dim">Partly sunny</span></div>
  </div>
  <div class="apps">
    <button class="app" aria-label="Start"><svg width="36" height="36" viewBox="0 0 36 36"><defs><linearGradient id="win" x1="0" y1="0" x2="1" y2="1"><stop stop-color="#75f3ff"/><stop offset="1" stop-color="#0a93fb"/></linearGradient></defs><path fill="url(#win)" d="M0 1h17v17H0zM18 1h17v17H18zM0 19h17v17H0zM18 19h17v17H18z"/></svg></button>
    <button class="app" aria-label="Search"><svg width="36" height="36" viewBox="0 0 36 36"><circle cx="16" cy="15" r="12.500" fill="#40595a" stroke="#e4e4e6" stroke-width="3.400"/><path d="M25 25l8 8" stroke="#cfcfd2" stroke-width="4" stroke-linecap="round"/></svg></button>
    <button class="app" aria-label="Task view"><svg width="36" height="36" viewBox="0 0 36 36"><rect x="9" y="1" width="27" height="25" rx="1" fill="#efefef"/><rect y="10" width="27" height="25" rx="1" fill="#5b5b5b"/><path d="M9 10h18v16H9z" fill="#a7a7a7"/></svg></button>
    <button class="app" aria-label="Chat"><svg width="36" height="36" viewBox="0 0 36 36"><defs><linearGradient id="chat" x1="0" y1="0" x2=".4" y2="1"><stop stop-color="#8f6fae"/><stop offset="1" stop-color="#5656cf"/></linearGradient></defs><path d="M18 1a17 17 0 1 1-7 33L1 35l2-9A17 17 0 0 1 18 1z" fill="url(#chat)"/><rect x="8" y="11" width="14" height="14" rx="2" fill="#fff"/><path d="M23.500 16l4-4v12l-4-4z" fill="#fff"/></svg></button>
    <button class="app active" aria-label="Chrome"><svg width="46" height="46" viewBox="0 0 46 46"><path d="M23 23L7.400 14A18 18 0 0 1 38.600 14z" fill="#e33b2e"/><path d="M23 23V5a18 18 0 0 1 0 36z" fill="#fbbc0a"/><path d="M23 23l9 5-8 13A18 18 0 0 1 7.400 14z" fill="#249a45"/><path d="M23 14H38.600A18 18 0 0 0 7.400 14l8 13z" fill="#e33b2e"/><circle cx="23" cy="23" r="9" fill="#fff"/><circle cx="23" cy="23" r="7" fill="#2877ea"/><circle cx="36" cy="12" r="11.500" fill="#b4b4b4"/><path d="M28 8q8-9 14-2l-4 5-6-3zM33 21l3-8 5 4z" fill="#6f6f6f"/><path d="M28 11l6 4-2 6z" fill="#e5e5e5"/></svg></button>
    <button class="app" aria-label="Terminal"><svg width="34" height="34" viewBox="0 0 34 34"><defs><linearGradient id="hyp" x1="0" y1="0" x2="0" y2="1"><stop stop-color="#f03cb0"/><stop offset="1" stop-color="#fca53a"/></linearGradient></defs><rect x="1.500" y="2" width="31" height="30" rx="6" fill="#000" stroke="url(#hyp)" stroke-width="2.400"/><path d="M9 7l-2 6h3l-2 5 5-7h-3l2-4z" fill="#fff"/><path d="M13 16h6" stroke="#aaa" stroke-width="2"/></svg></button>
    <button class="app open" aria-label="File Explorer"><svg width="36" height="36" viewBox="0 0 36 36"><path d="M0 3h12l3 3v6H0z" fill="#dd9a07"/><path d="M0 8l14-2h22v29H0z" fill="#fccb43"/><path d="M6 35V27a3 3 0 0 1 3-3h18a3 3 0 0 1 3 3v8z" fill="#0f6fc6"/><path d="M11 29h14" stroke="#0a4b8c" stroke-width="2"/></svg></button>
    <button class="app" aria-label="Atom"><svg width="36" height="36" viewBox="0 0 36 36"><defs><linearGradient id="atom" x1="0" y1="0" x2="0" y2="1"><stop stop-color="#a5dc8c"/><stop offset="1" stop-color="#0fa06b"/></linearGradient></defs><circle cx="18" cy="18" r="18" fill="url(#atom)"/><g fill="none" stroke="#fff" stroke-width="1.300"><ellipse cx="18" cy="18" rx="12" ry="4.500" transform="rotate(10 18 18)"/><ellipse cx="18" cy="18" rx="12" ry="4.500" transform="rotate(70 18 18)"/><ellipse cx="18" cy="18" rx="12" ry="4.500" transform="rotate(130 18 18)"/></g><circle cx="18" cy="18" r="1.600" fill="#fff"/></svg></button>
    <button class="app open" aria-label="Visual Studio Code"><svg width="36" height="36" viewBox="0 0 36 36"><path d="M26 0L4 22l-4 2 2 3 3-1L26 9z" fill="#0b6cb4"/><path d="M0 11l3-2 3 1 22 17v9L2 14z" fill="#0a86d6"/><path d="M26 0l10 4v28l-10 4-1-3V3z" fill="#27a4f2"/></svg></button>
    <button class="app" aria-label="Brave"><svg width="32" height="36" viewBox="0 0 32 36"><path d="M9 0h14l3 4 4 0 1 7-4 18-11 7-11-7L1 11l1-7 4 0z" fill="#fb4a1e"/><path d="M7 8l6 1 3-1 3 1 6-1 3 6-4 7 1 3-9 6-9-6 1-3-4-7z" fill="#fff"/><path d="M7 13l6 2-1 3zM25 13l-6 2 1 3zM16 15l1 7 4 1-5 3-5-3 4-1z" fill="#fb4a1e"/></svg></button>
    <button class="app" aria-label="YouTube Music"><svg width="32" height="32" viewBox="0 0 32 32"><circle cx="16" cy="16" r="16" fill="#fb0a1b"/><circle cx="16" cy="16" r="8" fill="none" stroke="#fff" stroke-width="1.400"/><path d="M13 12l7 4-7 4z" fill="#fff"/></svg></button>
    <button class="app open" aria-label="Paint"><svg width="36" height="36" viewBox="0 0 36 36"><defs><linearGradient id="paint" x1="0" y1="0" x2=".3" y2="1"><stop stop-color="#55d8f5"/><stop offset="1" stop-color="#1278d4"/></linearGradient></defs><path d="M20 1c9 0 15 7 14 17-1 9-8 16-16 16-6 0-4-5-4-8 0-4-4-3-7-1-4 3-6 1-6-4C1 9 10 1 20 1zm-1 17a2.500 2.500 0 1 0 .1 5 2.500 2.500 0 0 0-.1-5z" fill="url(#paint)"/><circle cx="6" cy="18" r="3.200" fill="#d9532b"/><circle cx="10" cy="11" r="3.200" fill="#3b9a0d"/><circle cx="18" cy="8" r="3.200" fill="#fdbd12"/><path d="M23 10h9l-2 7h-5z" fill="#ecd9b9"/><path d="M25.500 17h4v17h-4z" fill="#a8620f"/></svg></button>
  </div>
  <div class="tray">
    <button aria-label="Hidden icons"><svg width="20" height="12" viewBox="0 0 20 12"><path d="M1 11l9-9 9 9" fill="none" stroke="#fff" stroke-width="1.400"/></svg></button>
    <span class="lang"><span>ENG</span><span>IN</span></span>
    <span class="status-icons">
      <svg width="24" height="20" viewBox="0 0 24 20"><g fill="none" stroke="#fff" stroke-width="1.800"><path d="M1 8a15 15 0 0 1 22 0M4.500 11.500a10.500 10.500 0 0 1 15 0M8 15a6 6 0 0 1 8 0"/></g><circle cx="12" cy="17.500" r="2" fill="#fff"/></svg>
      <svg width="24" height="20" viewBox="0 0 24 20"><g fill="none" stroke="#fff" stroke-width="1.600"><path d="M1 7v6h4l6 5V2L5 7zM15 6l8 8M23 6l-8 8"/></g></svg>
      <svg width="24" height="20" viewBox="0 0 24 20"><path d="M9 4h9a3 3 0 0 1 3 3v8a3 3 0 0 1-3 3H4a3 3 0 0 1-3-3v-4" fill="none" stroke="#fff" stroke-width="1.800"/><path d="M9 7h9v8H4v-3zM22 8h2v6h-2zM5 0L0 7h3l-1 5 6-8H5z" fill="#fff"/></svg>
    </span>
    <span class="clock"><span>15:04</span><span>07-01-2023</span></span>
    <svg width="22" height="24" viewBox="0 0 22 24"><path d="M13 3A8 8 0 0 0 3 10v5l-2 4h19l-2-4M7 19a4 3.500 0 0 0 7 0" fill="none" stroke="#fff" stroke-width="1.600"/><path d="M8 8h5l-5 6h5M15 1h5l-5 6h5" fill="none" stroke="#fff" stroke-width="1.600"/></svg>
  </div>
</footer>
</body>
</html>
```
FILE: styles.css
```css
* { box-sizing: border-box; }

body {
  margin: 0;
  height: 100vh;
  display: flex;
  flex-direction: column;
  overflow: hidden;
  font-family: "Open Sans", "Noto Sans", sans-serif;
  color: #212529;
  background: #fff;
}

button {
  border: 0;
  padding: 0;
  background: none;
  font: inherit;
  color: inherit;
  display: flex;
  align-items: center;
  justify-content: center;
}

h1, h2, p { margin: 0; }

a { text-decoration: none; }

/* browser window */
.tabstrip {
  display: flex;
  height: 51px;
  padding-left: 12px;
  background: #1a381b;
  flex: none;
}

.tab {
  display: flex;
  align-items: center;
  width: 361px;
  padding: 0 16px 0 18px;
  gap: 12px;
  background: #285e2b;
  border-radius: 12px 12px 0 0;
  color: #fff;
  font-size: 17px;
}

.favicon { width: 24px; height: 24px; }
.tab-title { flex: 1; }
.tab-close { width: 18px; height: 18px; }
.new-tab { width: 64px; }

.window-controls {
  display: flex;
  height: 44px;
  margin-left: auto;
}
.window-controls button { width: 69px; }

.toolbar {
  display: flex;
  align-items: center;
  height: 56px;
  padding: 0 9px;
  background: #285e2b;
  border-bottom: 2px solid #5a8a5f;
  flex: none;
}

.tool { width: 48px; height: 42px; flex: none; }
.extensions { display: flex; }

.omnibox {
  flex: 1;
  display: flex;
  align-items: center;
  height: 42px;
  margin: 0 9px;
  padding: 0 3px 0 17px;
  border-radius: 21px;
  background: #264829;
}

.url {
  flex: 1;
  margin: 0 0 0 14px;
  padding: 0;
  border: 0;
  outline: 0;
  font: 20px "Open Sans", "Noto Sans", sans-serif;
  color: transparent;
  background: linear-gradient(to right, #fff 85px, #a9b9aa 85px);
  -webkit-background-clip: text;
  background-clip: text;
}

.ext-html { font: 800 9px "Open Sans", sans-serif; text-anchor: middle; fill: #111; }
.ext-f { font: italic 26px "Liberation Serif", serif; color: #000; }

/* web page */
.viewport {
  flex: 1;
  min-height: 0;
  display: flex;
}

.page { flex: 1; overflow: hidden; }

.scrollbar {
  display: flex;
  flex-direction: column;
  align-items: center;
  justify-content: space-between;
  width: 25px;
  padding: 10px 2px 9px;
  background: #f1f1f1;
}
.track { flex: 1; align-self: stretch; padding: 9px 0; }
.thumb { height: 69%; background: #c1c1c1; }

.navbar {
  display: flex;
  align-items: center;
  justify-content: space-between;
  height: 109px;
  padding: 0 24px;
  background: #0d6efd;
}

.brand {
  color: #fff;
  padding-bottom: 8px;
  font: italic 38px "Liberation Serif", serif;
}

.nav-actions {
  display: flex;
  align-items: center;
  gap: 24px;
  font-family: Inter, sans-serif;
  font-size: 24px;
  font-weight: 700;
}

.profile { color: #f8f9fa; margin-right: 12px; padding-bottom: 4px; }

.wallet {
  height: 60px;
  padding: 0 20px 0 28px;
  gap: 6px;
  border-radius: 8px;
  background: #1b3f74;
  color: #a8c9fa;
  font-size: 23px;
}

.signout {
  height: 57px;
  padding: 0 27px;
  border-radius: 8px;
  background: #f8f9fa;
  color: #000;
}

.heading {
  font: 400 51px/130px Inter, sans-serif;
  color: #6c757d;
  text-align: center;
}

.content {
  display: grid;
  grid-template-columns: 26fr 19fr;
  gap: 12px;
  padding: 0 24px 48px 36px;
  align-items: start;
}

.stations {
  display: flex;
  flex-direction: column;
  gap: 12px;
  padding-top: 12px;
}

.sprite { display: none; }

.station {
  display: flex;
  height: 144px;
  border: 1px solid #cdcfd1;
  border-radius: 8px;
}

.station-icon { width: 186px; padding: 32px 0 0 31px; }

.station-info { flex: 1; padding-top: 5px; }
.station-info h2 { font-size: 28px; font-weight: 600; line-height: 42px; }
.station-info p { font-size: 22px; line-height: 42px; }
.station-info .address { color: #6c757d; }

.station-side {
  display: flex;
  flex-direction: column;
  align-items: flex-end;
  justify-content: space-between;
}

.price {
  padding: 16px 36px 0 0;
  font: bold 22px/32px "DejaVu Serif Condensed", "DejaVu Serif", serif;
}

.status {
  padding-left: 12px;
  background: #198754;
  color: #f8f9fa;
  font: 700 24px/36px Inter, sans-serif;
}

/* map */
.map-card {
  position: relative;
  padding: 1px;
  border: 1px solid #cdcfd1;
  border-radius: 8px;
  box-shadow: 0 12px 36px rgba(0, 0, 0, .18);
}

.map { display: block; width: 100%; height: auto; }

.casing, .road, .major, .major-casing, .rail { fill: none; stroke-linejoin: round; stroke-linecap: round; }
.casing { stroke: #dcd4cd; stroke-width: 12px; }
.road { stroke: #fff; stroke-width: 8px; }
.major-casing { stroke: #f3dc9c; stroke-width: 18px; }
.major { stroke: #ffebae; stroke-width: 14px; }
.rail { stroke: #9a9a9a; stroke-width: 4px; stroke-dasharray: 26px 20px; stroke-linecap: butt; }

.map text { text-anchor: middle; }
.map .start { text-anchor: start; }
.map .end { text-anchor: end; }

.area { font: 800 50px "Open Sans", sans-serif; fill: #a6a6a6; }
.area .wide { font-size: 55px; }
.area, .town, .poi { stroke: #f2f2f2; stroke-width: 8px; paint-order: stroke; stroke-linejoin: round; }
.town { font: 55px "Noto Sans", sans-serif; fill: #666; }
.town .hamlet { font-style: italic; }
.town .city { font-size: 60px; font-weight: 500; fill: #222; }
.poi { font: 500 56px "Noto Sans", sans-serif; }
.water { fill: #4a86cc; font-size: 58px; font-style: italic; }
.shield { font: 500 32px "Noto Sans", sans-serif; fill: #222; stroke: none; }
.small { font-size: 24px; }
.pin-shadow { fill: none; stroke: #aaa; stroke-width: 3px; }

.city-picker {
  position: absolute;
  top: 14px;
  right: 5px;
  width: 449px;
  padding: 6px;
  border: 1px solid #cdcfd1;
  border-radius: 8px;
  background: #f3f3f3;
  box-shadow: 0 12px 36px rgba(0, 0, 0, .2);
}

.city-select {
  display: block;
  width: 100%;
  height: 66px;
  padding: 0 18px;
  border: 6px solid #bad3f8;
  border-radius: 14px;
  appearance: none;
  color: #212529;
  font: 26px Inter, sans-serif;
  background: #f3f3f3 url("data:image/svg+xml,%3Csvg xmlns='http://www.w3.org/2000/svg' viewBox='0 0 16 16'%3E%3Cpath fill='none' stroke='%23212529' stroke-width='2' d='M1 4l7 7 7-7'/%3E%3C/svg%3E") no-repeat right 22px center / 16px;
}

.map-controls {
  position: absolute;
  top: 233px;
  right: 1px;
  display: flex;
  flex-direction: column;
  gap: 8px;
}
.map-controls button {
  width: 48px;
  height: 48px;
  border-radius: 50%;
  background: #527b8f;
}

/* taskbar */
.taskbar {
  position: relative;
  flex: none;
  display: grid;
  grid-template-columns: 1fr auto 1fr;
  align-items: center;
  height: 72px;
  padding: 0 0 2px 2px;
  border-top: 2px solid #2f5052;
  background: linear-gradient(to right, #0e3338, #163c3d 12%, #0e3338 18%, #183e3e 23%, #143a3c 32%, #0e3338 48%, #0e3338);
  color: #fff;
  font-size: 17px;
  line-height: 24px;
}

.weather { display: flex; align-items: center; gap: 10px; padding-left: 30px; }
.weather-text { display: flex; flex-direction: column; }
.dim { color: #c0cccd; }

.apps { display: flex; gap: 6px; }
.app { position: relative; width: 60px; height: 60px; border-radius: 6px; }
.app.active { background: #24474b; border: 1px solid #2c4f52; }
.app.active::after, .app.open::after {
  content: "";
  position: absolute;
  bottom: 1px;
  left: 50%;
  width: 9px;
  height: 5px;
  margin-left: -4px;
  border-radius: 3px;
  background: #98a5a7;
}
.app.active::after { width: 24px; margin-left: -12px; background: #0699b5; }

.tray {
  display: flex;
  align-items: center;
  justify-content: flex-end;
  padding-right: 31px;
}
.lang { display: flex; flex-direction: column; align-items: center; padding: 0 28px 0 30px; }
.status-icons { display: flex; gap: 12px; }
.clock { display: flex; flex-direction: column; align-items: flex-end; padding: 0 12px 0 26px; }
```
